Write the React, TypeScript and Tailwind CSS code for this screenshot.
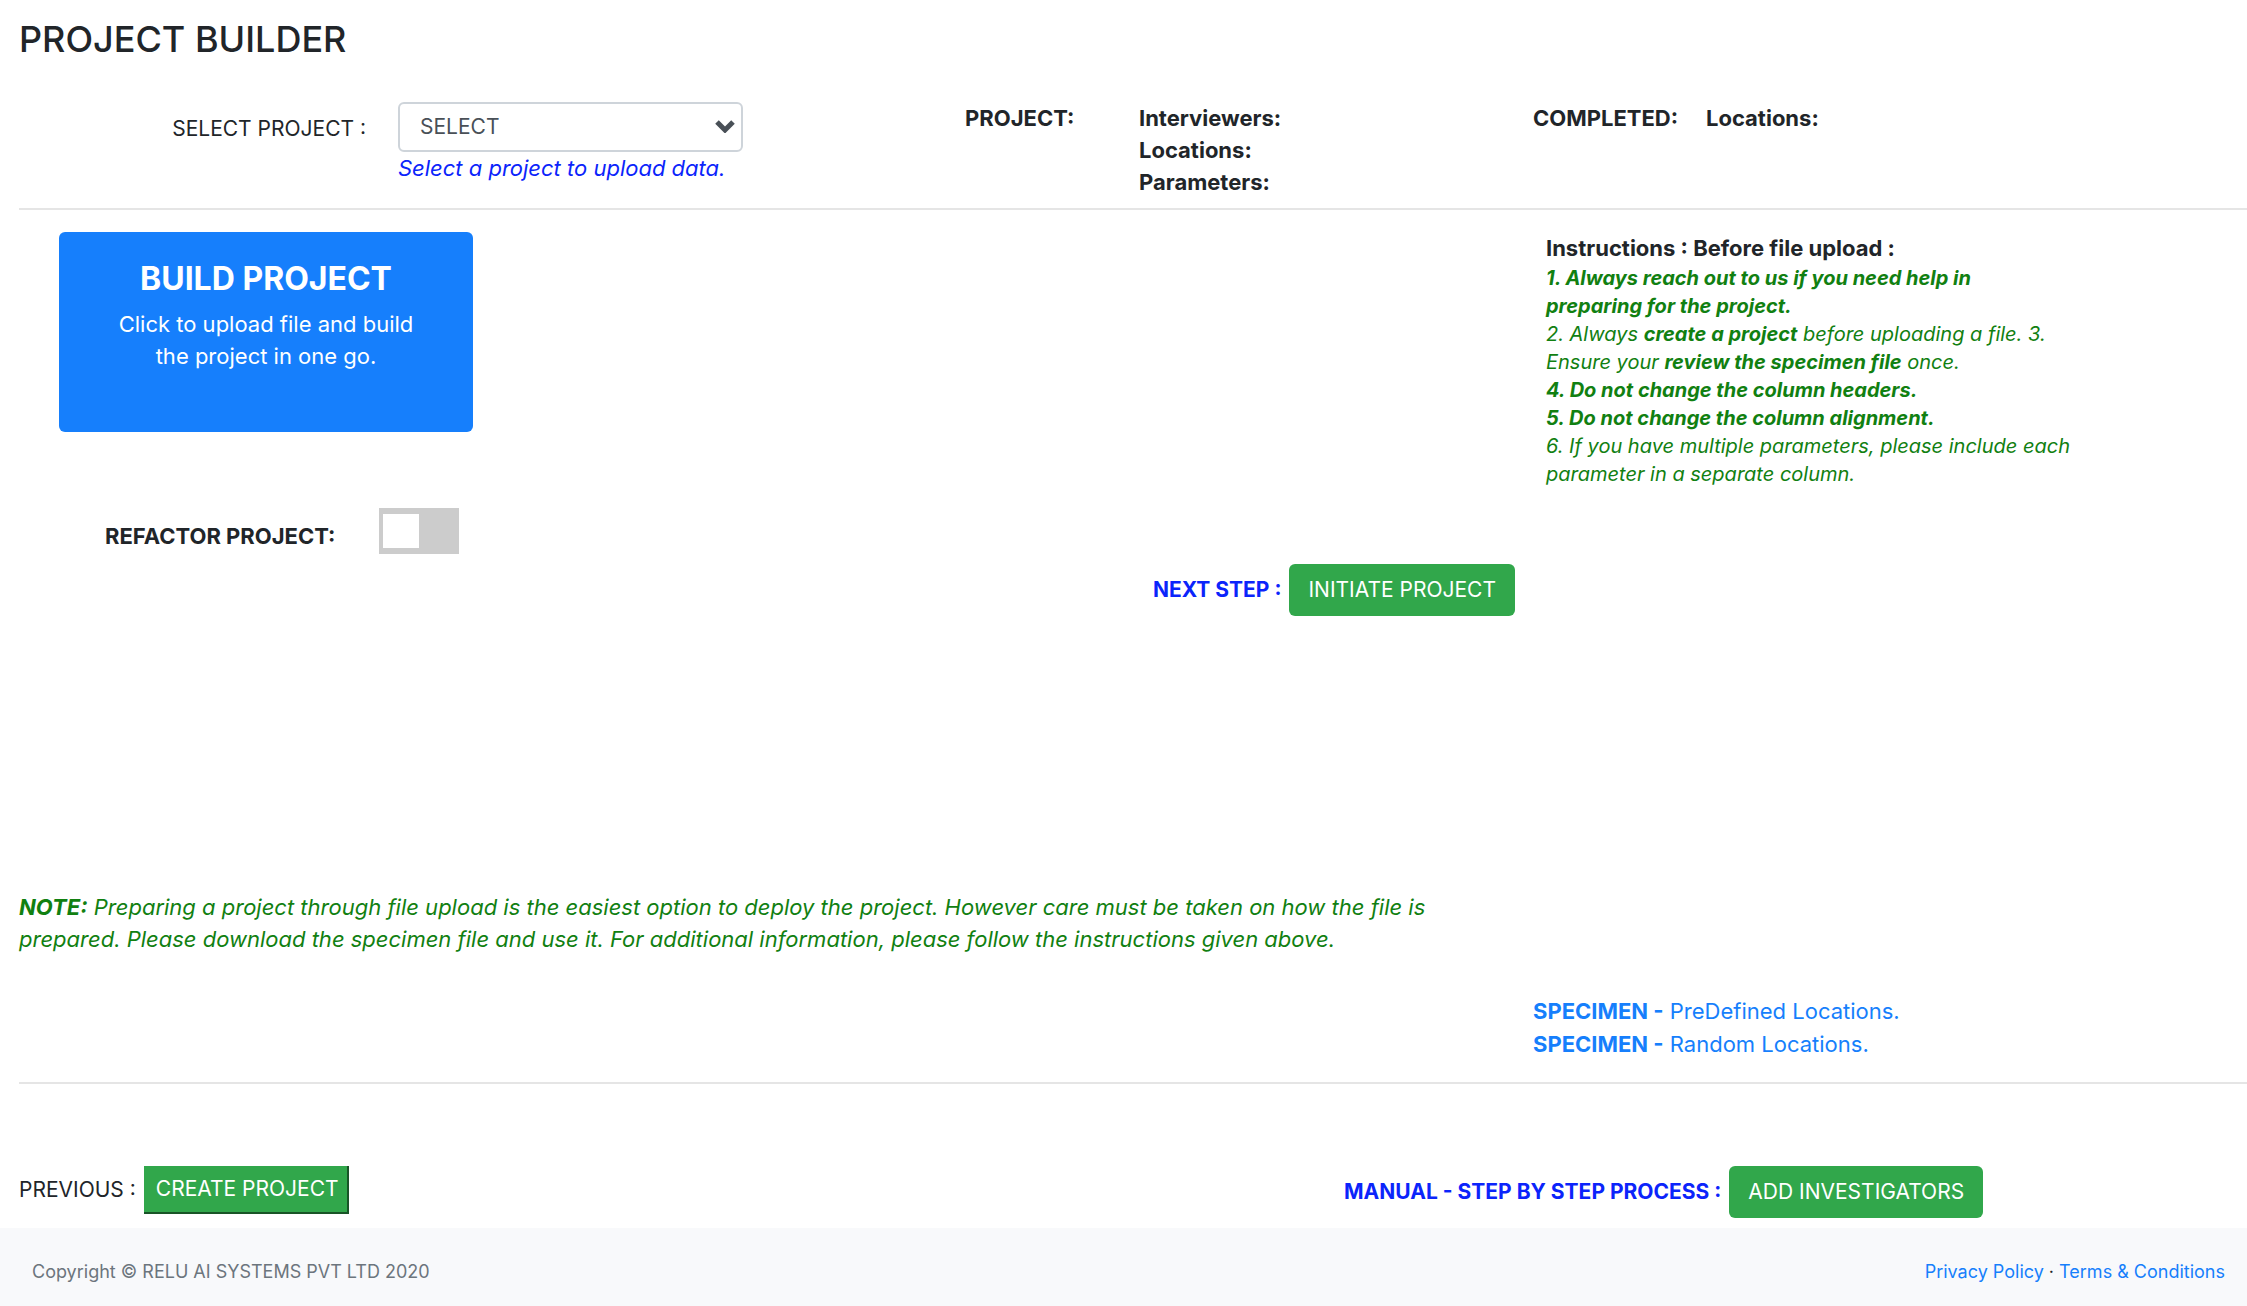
import React from "react";

const summary = ["Interviewers:", "Locations:", "Parameters:"];

const specimens = ["PreDefined Locations.", "Random Locations."];

const Header = () => {
  return (
    <header className="pl-[19px]">
      <h1 className="pt-[15px] text-[36px] font-medium leading-[48px]">PROJECT BUILDER</h1>
      <div className="mt-[39px] grid grid-cols-[379fr_567fr_568fr_714fr] pb-[10px]">
        <label htmlFor="project" className="pr-8 pt-[11px] text-right leading-8">
          SELECT PROJECT :
        </label>
        <div>
          <div className="relative w-[345px]">
            <select
              id="project"
              className="block h-[50px] w-full appearance-none rounded-md border-2 border-[#ced4da] bg-white px-5 text-[#495057]"
            >
              <option>SELECT</option>
            </select>
            <svg
              viewBox="0 0 20 13"
              className="pointer-events-none absolute right-2 top-[18px] h-[13px] w-5"
              fill="none"
              stroke="#495057"
              strokeWidth="5"
            >
              <path d="M2 2l8 8 8-8" />
            </svg>
          </div>
          <p className="text-[22px] italic leading-8 text-[#0b24fb]">Select a project to upload data.</p>
        </div>
        <div className="flex text-[22px] font-bold leading-8">
          <div className="w-[174px]">PROJECT:</div>
          <ul>
            {summary.map((item) => (
              <li key={item}>{item}</li>
            ))}
          </ul>
        </div>
        <div className="flex text-[22px] font-bold leading-8">
          <div className="w-[173px]">COMPLETED:</div>
          <div>Locations:</div>
        </div>
      </div>
    </header>
  );
};

const Instructions = () => {
  return (
    <div className="w-[545px] pl-[13px]">
      <h2 className="text-[22px] font-bold leading-8">Instructions : Before file upload :</h2>
      <div className="text-[20px] italic leading-7 text-[#118011]">
        <p className="font-bold">
          1. Always reach out to us if you need help in
          <br />
          preparing for the project.
        </p>
        <p>
          2. Always <b>create a project</b> before uploading a file. 3. Ensure your{" "}
          <b>review the specimen file</b> once.
        </p>
        <p className="font-bold">4. Do not change the column headers.</p>
        <p className="font-bold">5. Do not change the column alignment.</p>
        <p>6. If you have multiple parameters, please include each parameter in a separate column.</p>
      </div>
    </div>
  );
};

const App = () => {
  return (
    <div className="min-h-screen bg-white font-[Inter,'Liberation_Sans',sans-serif] text-[21px] text-[#212529]">
      <Header />
      <hr className="ml-[19px] border-t-2 border-[#e5e5e5]" />

      <main className="pl-[19px]">
        <div className="grid grid-cols-[1514fr_714fr] pb-[21px] pt-[22px]">
          <div className="pb-[106px]">
            <button className="ml-10 flex h-[200px] w-[414px] flex-col items-center rounded-md bg-[#167ffc] px-12 pt-[27px] text-[22px] text-white">
              <span className="text-[32px] font-bold leading-10">BUILD PROJECT</span>
              <span className="mt-[9px] leading-8">Click to upload file and build the project in one go.</span>
            </button>

            <div className="ml-[86px] mt-[76px] flex">
              <label htmlFor="refactor" className="w-[274px] pt-3 text-[22px] font-bold leading-8">
                REFACTOR PROJECT:
              </label>
              <input
                id="refactor"
                type="checkbox"
                className="h-[46px] w-20 cursor-pointer appearance-none bg-[#ccc] px-1 py-1.5 before:block before:h-[34px] before:w-9 before:bg-white checked:bg-[#167ffc] checked:before:ml-9"
              />
            </div>

            <div className="mr-[18px] mt-[10px] flex items-center justify-end gap-2">
              <span className="font-bold text-[#0b24fb]">NEXT STEP :</span>
              <button className="h-[52px] rounded-md bg-[#31a74b] px-[19px] text-white">INITIATE PROJECT</button>
            </div>

            <p className="mt-[275px] max-w-[1440px] text-[22px] italic leading-8 text-[#118011]">
              <b>NOTE:</b> Preparing a project through file upload is the easiest option to deploy the project. However care
              must be taken on how the file is prepared. Please download the specimen file and use it. For additional
              information, please follow the instructions given above.
            </p>
          </div>

          <div className="flex flex-col justify-between">
            <Instructions />
            <ul>
              {specimens.map((name) => (
                <li key={name} className="leading-8">
                  <a href="#" className="text-[22px] text-[#167ffc]">
                    <b>SPECIMEN -</b> {name}
                  </a>
                </li>
              ))}
            </ul>
          </div>
        </div>

        <hr className="border-t-2 border-[#e5e5e5]" />

        <div className="grid grid-cols-[1325fr_903fr] pb-[10px] pt-[82px]">
          <div className="flex items-start gap-2">
            <span className="leading-[48px]">PREVIOUS :</span>
            <button className="h-12 border-b-2 border-r-2 border-[#195427] bg-[#31a74b] pl-3 pr-2 text-white">
              CREATE PROJECT
            </button>
          </div>
          <div className="flex items-center gap-2">
            <span className="font-bold text-[#0b24fb]">MANUAL - STEP BY STEP PROCESS :</span>
            <button className="h-[52px] rounded-md bg-[#31a74b] px-[19px] text-white">ADD INVESTIGATORS</button>
          </div>
        </div>
      </main>

      <footer className="flex h-[78px] items-center justify-between bg-[#f8f9fb] pl-8 pr-[22px] pt-2 text-[18px]">
        <span className="text-[#6c757d]">Copyright © RELU AI SYSTEMS PVT LTD 2020</span>
        <div>
          <a href="#" className="text-[#167ffc]">Privacy Policy</a> ·{" "}
          <a href="#" className="text-[#167ffc]">Terms &amp; Conditions</a>
        </div>
      </footer>
    </div>
  );
};

export default App;
